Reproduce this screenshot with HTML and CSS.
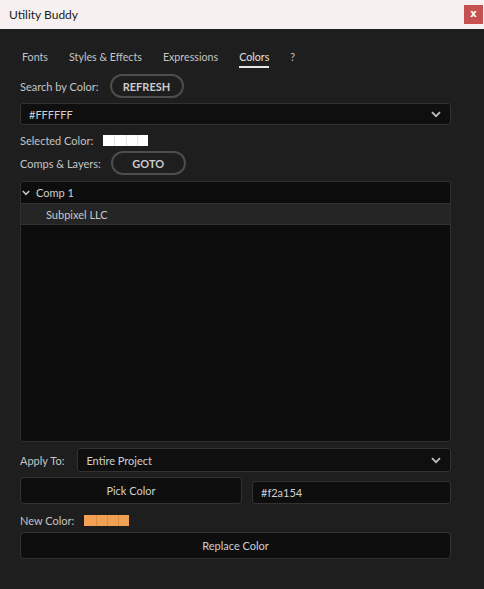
FILE: index.html
```html
<!DOCTYPE html>
<html>
<head>
<meta charset="utf-8">
<link rel="stylesheet" href="styles.css">
</head>
<body>
<div class="window">
  <div class="titlebar">
    <span class="title">Utility Buddy</span>
    <div class="close">x</div>
  </div>
  <div class="content">
    <div class="tabs">
      <span class="tab">Fonts</span>
      <span class="tab">Styles &amp; Effects</span>
      <span class="tab">Expressions</span>
      <span class="tab active">Colors</span>
      <span class="tab">?</span>
    </div>
    <div class="row row-search">
      <span class="label">Search by Color:</span>
      <button class="pill pill-refresh">REFRESH</button>
    </div>
    <div class="select select-color">
      <span>#FFFFFF</span>
      <svg class="chev" width="10" height="7" viewBox="0 0 10 7"><path d="M1 1.2 L5 5.2 L9 1.2" fill="none" stroke="#bdbdbd" stroke-width="1.8"/></svg>
    </div>
    <div class="row row-selected">
      <span class="label">Selected Color:</span>
      <div class="swatch white"><i></i><i></i><i></i><i></i></div>
    </div>
    <div class="row row-comps">
      <span class="label">Comps &amp; Layers:</span>
      <button class="pill pill-goto">GOTO</button>
    </div>
    <div class="tree">
      <div class="tree-head">
        <svg class="tchev" width="8" height="6" viewBox="0 0 8 6"><path d="M0.8 1 L4 4.3 L7.2 1" fill="none" stroke="#c8c8c8" stroke-width="1.5"/></svg>
        <span>Comp 1</span>
      </div>
      <div class="tree-item">Subpixel LLC</div>
    </div>
    <div class="row row-apply">
      <span class="label">Apply To:</span>
      <div class="select select-apply">
        <span>Entire Project</span>
        <svg class="chev" width="10" height="7" viewBox="0 0 10 7"><path d="M1 1.2 L5 5.2 L9 1.2" fill="none" stroke="#bdbdbd" stroke-width="1.8"/></svg>
      </div>
    </div>
    <div class="row row-pick">
      <button class="btn btn-pick">Pick Color</button>
      <div class="input">#f2a154</div>
    </div>
    <div class="row row-new">
      <span class="label">New Color:</span>
      <div class="swatch orange"><i></i><i></i><i></i><i></i></div>
    </div>
    <button class="btn btn-replace">Replace Color</button>
  </div>
</div>
</body>
</html>
```
FILE: styles.css
```css
* { box-sizing: border-box; }
html, body { margin: 0; padding: 0; background: #1e1e1e; }
body { width: 484px; height: 589px; overflow: hidden; font-family: Lato, "Noto Sans", sans-serif; font-size: 11px; color: #c4c4c4; }
.window { width: 484px; height: 589px; display: flex; flex-direction: column; background: #1e1e1e; }
.titlebar { height: 29px; background: #f6f0f0; display: flex; align-items: center; justify-content: space-between; padding-left: 9px; flex-shrink: 0; }
.title { font-family: Lato, sans-serif; font-size: 12px; color: #1a1a1a; margin-top: -1px; }
.close { width: 19px; height: 19px; margin-right: 1px; background: #c75050; color: #fff; font-family: "DejaVu Sans", sans-serif; font-weight: bold; font-size: 10px; display: flex; align-items: center; justify-content: center; line-height: 1; padding-bottom: 2px; }
.content { padding: 0 33px 0 20px; display: flex; flex-direction: column; }
.tabs { display: flex; gap: 21px; padding-left: 2px; margin-top: 18px; height: 21px; }
.tab { color: #c4c4c4; height: 21px; line-height: 19px; font-size: 10.7px; border-bottom: 2px solid transparent; }
.tab.active { color: #e0e0e0; border-bottom-color: #e6e6e6; }
.label { color: #c4c4c4; white-space: nowrap; }
.row { display: flex; align-items: center; }
.pill { background: transparent; border: 2px solid #4d4d4d; border-radius: 12px; color: #cccccc; font-family: Lato, sans-serif; font-weight: bold; font-size: 11px; height: 24px; padding: 0; display: flex; align-items: center; justify-content: center; }
.row-search { height: 24px; margin-top: 6px; }
.pill-refresh { width: 74px; margin-left: 11px; }
.select { background: #0f0f0f; border: 1px solid #323232; border-radius: 3px; display: flex; align-items: center; justify-content: space-between; padding: 0 8px 0 8px; color: #d0d0d0; }
.select-color { height: 22px; margin-top: 5px; width: 431px; }
.chev { margin-right: 1px; }
.row-selected { margin-top: 5px; height: 20px; }
.swatch { display: flex; height: 11px; margin-left: 10px; }
.swatch i { display: block; width: 11.25px; height: 11px; }
.swatch.white i { background: #ffffff; border-left: 1px solid #e4e4e4; }
.swatch.white i:first-child { border-left: none; }
.swatch.orange i { background: #f2a154; border-left: 1px solid #dc8d44; }
.swatch.orange i:first-child { border-left: none; }
.row-comps { height: 24px; margin-top: 1px; }
.pill-goto { width: 75px; margin-left: 10px; }
.tree { margin-top: 6px; width: 431px; height: 261px; background: #0d0d0d; border: 1px solid #2e2e2e; border-radius: 3px; overflow: hidden; }
.tree-head { height: 21px; display: flex; align-items: center; padding-left: 1px; color: #d0d0d0; }
.tchev { margin-right: 6px; margin-top: 0px; }
.tree-item { height: 22px; background: #252525; border-top: 1px solid #323232; border-bottom: 1px solid #323232; padding-left: 25px; display: flex; align-items: center; color: #c8c8c8; }
.row-apply { margin-top: 6px; height: 24px; }
.select-apply { margin-left: 13px; flex: 1; height: 24px; }
.row-pick { margin-top: 5px; height: 27px; align-items: flex-start; }
.btn { background: #0e0e0e; border: 1px solid #323232; border-radius: 4px; color: #cfcfcf; font-family: Lato, sans-serif; font-size: 11px; padding: 0; }
.btn-pick { width: 222px; height: 27px; }
.input { margin-left: 10px; margin-top: 4px; width: 199px; height: 23px; background: #0e0e0e; border: 1px solid #323232; border-radius: 3px; padding-left: 8px; display: flex; align-items: center; color: #d0d0d0; }
.row-new { margin-top: 5px; height: 22px; }
.btn-replace { margin-top: 1px; width: 431px; height: 27px; }
```
